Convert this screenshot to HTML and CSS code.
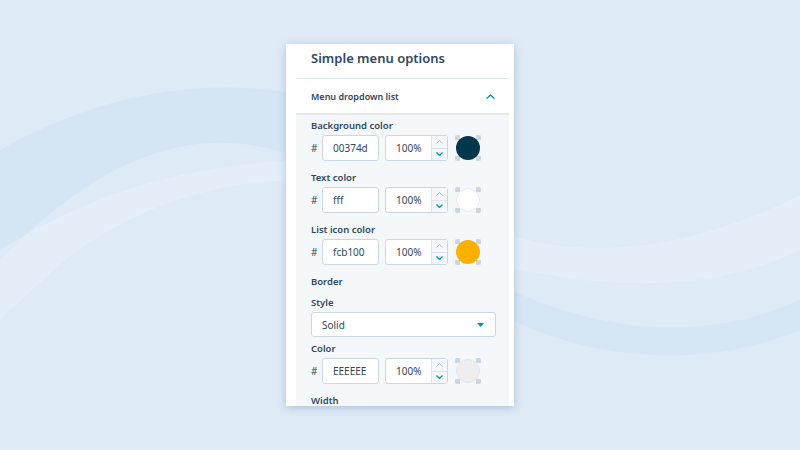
FILE: index.html
```html
<!DOCTYPE html>
<html>
<head>
<meta charset="utf-8">
<link rel="stylesheet" href="styles.css">
</head>
<body>
<svg class="bg-waves" viewBox="0 0 800 450" preserveAspectRatio="none" aria-hidden="true">
  <path d="M0 150 C 90 100, 180 80, 270 90 C 320 96, 350 120, 380 145 L 380 210 C 330 160, 260 135, 190 145 C 110 158, 50 210, 0 260 Z" fill="#d1e2f3" opacity="0.7"/>
  <path d="M0 250 C 80 200, 170 165, 300 160 L 300 180 C 200 182, 120 215, 60 265 C 30 292, 10 310, 0 320 Z" fill="#e8f1fa" opacity="0.5"/>
  <path d="M510 235 C 600 262, 700 245, 800 195 L 800 250 C 720 290, 620 292, 510 268 Z" fill="#e8f1fa" opacity="0.5"/>
  <path d="M510 290 C 600 330, 700 345, 800 300 L 800 330 C 700 370, 600 360, 510 320 Z" fill="#d1e2f3" opacity="0.6"/>
</svg>

<main class="stage">
  <section class="panel">
    <header class="panel-title">Simple menu options</header>

    <div class="section-head">
      <span>Menu dropdown list</span>
      <svg class="chev-up" width="9" height="5" viewBox="0 0 9 5"><path d="M1 4.3 L4.5 1 L8 4.3" fill="none" stroke="#0091ae" stroke-width="1.3" stroke-linecap="round" stroke-linejoin="round"/></svg>
    </div>

    <div class="section-body">
      <div class="field">
        <div class="label">Background color</div>
        <div class="color-row">
          <span class="hash">#</span>
          <div class="box hex">00374d</div>
          <div class="box pct">
            <span class="pct-val">100%</span>
            <div class="spin">
              <span class="spin-up"><svg width="7" height="4" viewBox="0 0 7 4"><path d="M0.5 3.5 L3.5 0.5 L6.5 3.5" fill="none" stroke="#b0c1d4" stroke-width="1"/></svg></span>
              <span class="spin-down"><svg width="7" height="4" viewBox="0 0 7 4"><path d="M0.5 0.5 L3.5 3.5 L6.5 0.5" fill="none" stroke="#0091ae" stroke-width="1.2"/></svg></span>
            </div>
          </div>
          <div class="swatch"><span class="dot dark"></span></div>
        </div>
      </div>

      <div class="field">
        <div class="label">Text color</div>
        <div class="color-row">
          <span class="hash">#</span>
          <div class="box hex">fff</div>
          <div class="box pct">
            <span class="pct-val">100%</span>
            <div class="spin">
              <span class="spin-up"><svg width="7" height="4" viewBox="0 0 7 4"><path d="M0.5 3.5 L3.5 0.5 L6.5 3.5" fill="none" stroke="#b0c1d4" stroke-width="1"/></svg></span>
              <span class="spin-down"><svg width="7" height="4" viewBox="0 0 7 4"><path d="M0.5 0.5 L3.5 3.5 L6.5 0.5" fill="none" stroke="#0091ae" stroke-width="1.2"/></svg></span>
            </div>
          </div>
          <div class="swatch"><span class="dot white"></span></div>
        </div>
      </div>

      <div class="field">
        <div class="label">List icon color</div>
        <div class="color-row">
          <span class="hash">#</span>
          <div class="box hex">fcb100</div>
          <div class="box pct">
            <span class="pct-val">100%</span>
            <div class="spin">
              <span class="spin-up"><svg width="7" height="4" viewBox="0 0 7 4"><path d="M0.5 3.5 L3.5 0.5 L6.5 3.5" fill="none" stroke="#b0c1d4" stroke-width="1"/></svg></span>
              <span class="spin-down"><svg width="7" height="4" viewBox="0 0 7 4"><path d="M0.5 0.5 L3.5 3.5 L6.5 0.5" fill="none" stroke="#0091ae" stroke-width="1.2"/></svg></span>
            </div>
          </div>
          <div class="swatch"><span class="dot yellow"></span></div>
        </div>
      </div>

      <div class="label group">Border</div>

      <div class="field select-field">
        <div class="label">Style</div>
        <div class="select">
          <span>Solid</span>
          <svg width="7" height="4" viewBox="0 0 7 4"><path d="M0 0 L7 0 L3.5 4 Z" fill="#0091ae"/></svg>
        </div>
      </div>

      <div class="field tight">
        <div class="label">Color</div>
        <div class="color-row">
          <span class="hash">#</span>
          <div class="box hex">EEEEEE</div>
          <div class="box pct">
            <span class="pct-val">100%</span>
            <div class="spin">
              <span class="spin-up"><svg width="7" height="4" viewBox="0 0 7 4"><path d="M0.5 3.5 L3.5 0.5 L6.5 3.5" fill="none" stroke="#b0c1d4" stroke-width="1"/></svg></span>
              <span class="spin-down"><svg width="7" height="4" viewBox="0 0 7 4"><path d="M0.5 0.5 L3.5 3.5 L6.5 0.5" fill="none" stroke="#0091ae" stroke-width="1.2"/></svg></span>
            </div>
          </div>
          <div class="swatch"><span class="dot grey"></span></div>
        </div>
      </div>

      <div class="label last">Width</div>
    </div>
  </section>
</main>
</body>
</html>
```

FILE: styles.css
```css
html, body {
  margin: 0;
  padding: 0;
}

body {
  width: 800px;
  height: 450px;
  overflow: hidden;
  background: #deeaf6;
  font-family: "Noto Sans", "Open Sans", sans-serif;
  color: #33475b;
  position: relative;
}

.bg-waves {
  position: absolute;
  left: 0;
  top: 0;
  width: 800px;
  height: 450px;
  z-index: 0;
}

.stage {
  position: relative;
  z-index: 1;
  display: flex;
  justify-content: center;
  padding-top: 44px;
}

.panel {
  width: 228px;
  height: 362px;
  box-sizing: border-box;
  background: #ffffff;
  padding: 0 5px 0 10px;
  box-shadow: 0 2px 8px rgba(60, 90, 130, 0.28);
  overflow: hidden;
}

.panel-title {
  font-size: 13px;
  font-weight: 600;
  line-height: 20px;
  padding: 4px 0 10px 15px;
  border-bottom: 1px solid #dfe6ee;
}

.section-head {
  display: flex;
  align-items: center;
  justify-content: space-between;
  height: 34px;
  padding: 0 14px 0 15px;
  font-size: 9px;
  font-weight: 600;
  border-bottom: 2px solid #e3eaf2;
}

.chev-up {
  display: block;
}

.section-body {
  background: #f5f8fa;
  padding: 5px 0 0 15px;
  height: 300px;
}

.label {
  font-size: 9.5px;
  font-weight: 600;
  line-height: 12px;
  height: 12px;
}

.field {
  margin-bottom: 11px;
}

.field .label {
  margin-bottom: 3px;
}

.field.select-field {
  margin-bottom: 6px;
}

.field.tight {
  margin-bottom: 11px;
}

.label.group {
  margin-bottom: 9px;
}

.color-row {
  display: flex;
  align-items: center;
  height: 26px;
}

.hash {
  width: 11px;
  font-size: 10px;
}

.box {
  box-sizing: border-box;
  height: 26px;
  background: #ffffff;
  border: 1px solid #cbd6e2;
  border-radius: 3px;
  font-size: 10px;
  display: flex;
  align-items: center;
}

.hex {
  width: 57px;
  padding-left: 10px;
}

.pct {
  width: 63px;
  margin-left: 6px;
  justify-content: space-between;
}

.pct-val {
  padding-left: 10px;
}

.spin {
  width: 15px;
  height: 24px;
  border-left: 1px solid #dfe3eb;
  background: #f5f8fa;
  display: flex;
  flex-direction: column;
}

.spin span {
  flex: 1;
  display: flex;
  align-items: center;
  justify-content: center;
}

.spin-up {
  border-bottom: 1px solid #dfe3eb;
}

.swatch {
  width: 26px;
  height: 26px;
  margin-left: 7px;
  display: flex;
  align-items: center;
  justify-content: center;
  background:
    linear-gradient(#cbd6e2, #cbd6e2) left top / 5px 5px no-repeat,
    linear-gradient(#cbd6e2, #cbd6e2) right top / 5px 5px no-repeat,
    linear-gradient(#cbd6e2, #cbd6e2) left bottom / 5px 5px no-repeat,
    linear-gradient(#cbd6e2, #cbd6e2) right bottom / 5px 5px no-repeat;
  border-radius: 2px;
}

.dot {
  width: 24px;
  height: 24px;
  border-radius: 50%;
  box-sizing: border-box;
}

.dot.dark { background: #00374d; }
.dot.white { background: #ffffff; border: 1px solid #e5ebf1; }
.dot.yellow { background: #fcb100; }
.dot.grey { background: #eeeeee; border: 1px solid #e3e6ea; }

.select {
  box-sizing: border-box;
  width: 185px;
  height: 25px;
  background: #ffffff;
  border: 1px solid #cbd6e2;
  border-radius: 3px;
  display: flex;
  align-items: center;
  justify-content: space-between;
  padding: 0 11px 0 10px;
  font-size: 10px;
}
```
